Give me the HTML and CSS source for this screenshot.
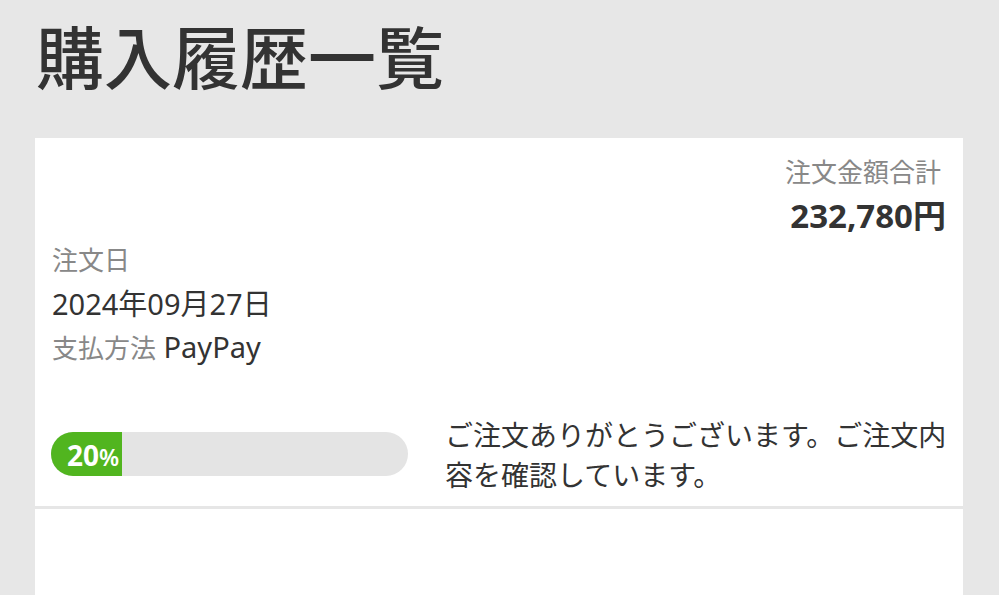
FILE: index.html
```html
<!DOCTYPE html>
<html lang="ja">
<head>
<meta charset="utf-8">
<title>購入履歴一覧</title>
<link rel="stylesheet" href="styles.css">
</head>
<body>
<h1 class="page-title">購入履歴一覧</h1>
<section class="orders">
  <article class="order">
    <div class="order-top">
      <div class="meta">
        <div class="label">注文日</div>
        <div class="value">2024年09月27日</div>
        <div class="value"><span class="label">支払方法</span> PayPay</div>
      </div>
      <div class="total">
        <div class="label">注文金額合計</div>
        <div class="amount">232,780円</div>
      </div>
    </div>
    <div class="status-row">
      <div class="progress">
        <div class="progress-fill" style="width:20%"><span class="pct">20</span><span class="pct-sign">%</span></div>
      </div>
      <p class="status-text">ご注文ありがとうございます。ご注文内容を確認しています。</p>
    </div>
  </article>
  <article class="order order-next"></article>
</section>
</body>
</html>
```
FILE: styles.css
```css
html, body {
  margin: 0;
  padding: 0;
}
body {
  background: #e7e7e7;
  font-family: "Noto Sans", "Noto Sans CJK JP", sans-serif;
  color: #333;
  height: 595px;
  overflow: hidden;
}
.page-title {
  margin: 0 0 42px 0;
  padding: 14px 0 0 36px;
  font-family: "Noto Sans CJK JP", sans-serif;
  font-size: 68px;
  line-height: 82px;
  font-weight: 500;
  color: #333;
}
.orders {
  margin: 0 36px 0 35px;
  background: #fff;
}
.order {
  border-bottom: 3px solid #e6e6e6;
  padding: 0 17px 12px 17px;
}
.order-top {
  display: flex;
  justify-content: space-between;
  align-items: flex-start;
  padding-top: 16px;
}
.meta {
  margin-top: 85px;
}
.label {
  color: #888;
  font-size: 26px;
}
.meta > .label,
.meta .value {
  line-height: 43px;
}
.meta .value {
  color: #333;
  font-size: 29px;
}
.total {
  text-align: right;
}
.total .label {
  line-height: 36px;
  margin-right: 5px;
}
.amount {
  margin-top: 4px;
  font-size: 33px;
  line-height: 44px;
  font-weight: 700;
  color: #333;
}
.status-row {
  display: flex;
  align-items: center;
  gap: 37px;
  margin-top: 44px;
}
.progress {
  flex: 0 0 357px;
  height: 44px;
  border-radius: 22px;
  background: #e4e4e4;
  overflow: hidden;
  margin-left: -1px;
}
.progress-fill {
  height: 100%;
  background: #51b51f;
  color: #fff;
  font-weight: 700;
  display: flex;
  align-items: baseline;
  padding-left: 16px;
  box-sizing: border-box;
  white-space: nowrap;
  line-height: 46px;
}
.pct {
  font-size: 28px;
}
.pct-sign {
  font-size: 23px;
  font-weight: 600;
}
.status-text {
  margin: 0;
  flex: 0 0 508px;
  font-family: "Noto Sans CJK JP", sans-serif;
  font-size: 28px;
  line-height: 40px;
  color: #333;
}
.order-next {
  height: 120px;
  border-bottom: none;
}
```
